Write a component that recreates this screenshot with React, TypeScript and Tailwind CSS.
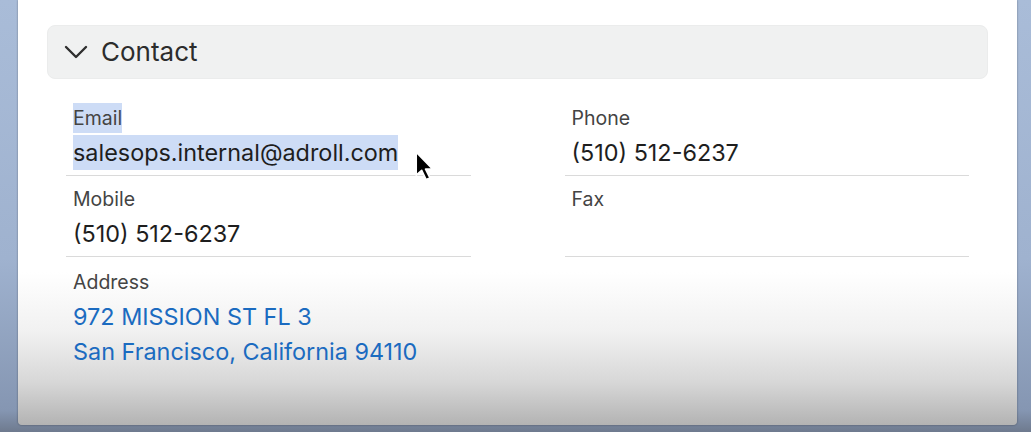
import React from "react";

const font = { fontFamily: "Inter, 'Noto Sans', sans-serif" };

function Field({
  label,
  lines,
  blue,
  selected,
  tall,
}: {
  label: string;
  lines: string[];
  blue?: boolean;
  selected?: boolean;
  tall?: boolean;
}) {
  return (
    <div
      className={`border-b border-[#dadada] pl-[7px] ${
        tall ? "pt-[10px] pb-[7px]" : "pt-[8px] pb-[5px]"
      }`}
    >
      <div className="h-[30px] text-[19.5px] leading-[30px] text-[#444444]">
        <span className={selected ? "inline-block bg-[#cddcf6]" : ""}>{label}</span>
      </div>
      <div className="mt-[2px]">
        {lines.length === 0 ? (
          <div className="h-[35px]" />
        ) : (
          lines.map((l) => (
            <div
              key={l}
              className={`h-[35px] text-[23.4px] leading-[35px] ${
                blue ? "text-[#1b6bc0]" : "text-[#1e1e1e]"
              }`}
            >
              <span className={selected ? "inline-block bg-[#cddcf6]" : ""}>{l}</span>
            </div>
          ))
        )}
      </div>
    </div>
  );
}

export default function App() {
  return (
    <div
      className="flex h-[432px] w-[1031px] bg-[linear-gradient(to_bottom,#a9bcd8_0%,#9fb2cf_60%,#8596b2_95%,#6e7a8e_100%)] pl-[18px] pr-[14px] pb-[7px]"
      style={font}
    >
      <div className="relative flex-1 rounded-b-[4px] bg-[linear-gradient(to_bottom,#ffffff_0%,#ffffff_64%,#f1f1f1_78%,#d7d7d7_90%,#b3b3b3_100%)] px-[29px] pt-[25px] shadow-[0_0_2px_rgba(0,0,0,0.45)]">
        <div className="flex h-[54px] items-center rounded-[8px] border border-[#ebecec] bg-[#f0f1f1] pl-[16px]">
          <svg width="24" height="14" viewBox="0 0 24 14" className="mr-[13px]">
            <path
              d="M2 2 L12 12 L22 2"
              fill="none"
              stroke="#2f2f2f"
              strokeWidth="2.4"
              strokeLinecap="round"
              strokeLinejoin="round"
            />
          </svg>
          <span className="text-[26px] leading-none text-[#2c2c2c]">Contact</span>
        </div>
        <div className="mt-[16px] grid grid-cols-2 gap-x-[94px] px-[19px]">
          <div className="flex flex-col">
            <Field label="Email" lines={["salesops.internal@adroll.com"]} selected />
            <Field label="Mobile" lines={["(510) 512-6237"]} />
            <Field
              label="Address"
              lines={["972 MISSION ST FL 3", "San Francisco, California 94110"]}
              blue
              tall
            />
          </div>
          <div className="flex flex-col">
            <Field label="Phone" lines={["(510) 512-6237"]} />
            <Field label="Fax" lines={[]} />
          </div>
        </div>
        <svg
          width="22"
          height="33"
          viewBox="0 0 20 30"
          className="absolute left-[396px] top-[151px]"
        >
          <path
            d="M2 1 L2 22 L7 17.5 L11 26 L14.5 24.5 L10.5 16.5 L17 16.5 Z"
            fill="#000"
            stroke="#fff"
            strokeWidth="1.5"
            strokeLinejoin="round"
          />
        </svg>
      </div>
    </div>
  );
}
